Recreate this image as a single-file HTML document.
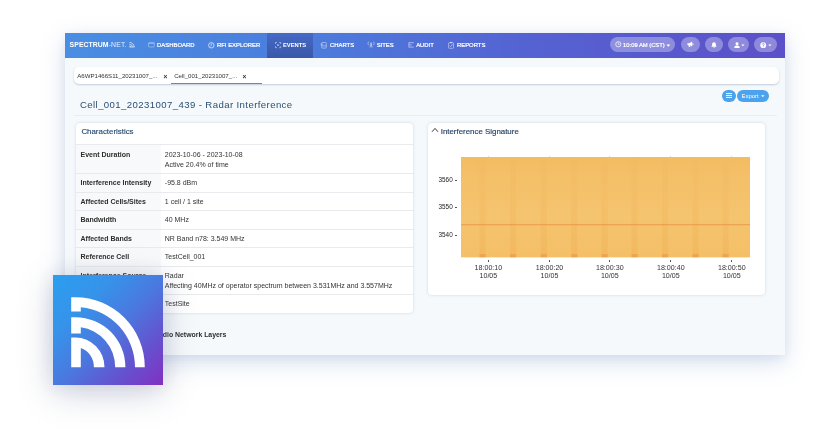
<!DOCTYPE html>
<html>
<head>
<meta charset="utf-8">
<style>
*{box-sizing:border-box;margin:0;padding:0}
html,body{width:821px;height:442px;overflow:hidden;background:#fff;font-family:"Liberation Sans",sans-serif;}
body{position:relative}
.abs{position:absolute}
.nav,.tabs,.title,.card,.win>.abs{will-change:transform}
.win{position:absolute;left:65.4px;top:33px;width:719.3px;height:321.6px;background:#f5f9fb;box-shadow:0 7px 22px rgba(110,140,195,.29),0 2px 8px rgba(110,140,195,.10);}
.nav{position:absolute;left:-.4px;top:0;width:720px;height:24.6px;background:linear-gradient(90deg,#4a8ee3 0%,#4c7bdc 35%,#5562d2 65%,#5c50c9 100%);color:#fff;font-size:5.8px;}
.nav .it{position:absolute;top:0;height:24.6px;line-height:24.6px;white-space:nowrap;font-weight:normal;font-size:5.9px;-webkit-text-stroke:.22px #fff}
.nav .b{font-weight:bold;-webkit-text-stroke:0;font-size:5.8px}
.nav .act{position:absolute;left:201.5px;top:0;width:46.3px;height:24.6px;background:linear-gradient(180deg,#4569c6,#3958a8)}
.pill{position:absolute;top:4.05px;height:15px;border-radius:8px;background:rgba(255,255,255,.32);}
.ic{position:absolute;overflow:visible}
.tabs{position:absolute;left:8.3px;top:34px;width:705.2px;height:17.4px;background:#fff;border-radius:5px;box-shadow:0 1px 2px rgba(100,120,150,.35);font-size:6.1px;color:#333;}
.tabs span{position:absolute;top:0;line-height:17.4px;white-space:nowrap}
.title{position:absolute;left:15px;top:62.6px;font-size:9.6px;color:#2b4f78;white-space:nowrap;line-height:17px;letter-spacing:.4px}
.hr{position:absolute;left:8.5px;top:82.3px;width:703px;height:1px;background:#e9eef2}
.card{position:absolute;background:#fff;border-radius:4px;box-shadow:0 0 3px rgba(120,150,200,.35);}
.c1{left:10.6px;top:90px;width:337.2px;height:189.6px;overflow:hidden}
.c2{left:362.5px;top:89.6px;width:336.5px;height:171.6px}
.chd{position:absolute;left:5.4px;top:0;font-size:7.9px;color:#274a73;line-height:18.7px;white-space:nowrap;-webkit-text-stroke:.15px #274a73}
.row{position:absolute;left:0;width:337.2px;border-top:1px solid #e8eaed;font-size:7px;color:#333}
.row .l{position:absolute;left:0;top:0;bottom:0;width:84.6px;background:#f8f9fa;font-weight:bold;padding-left:4.5px;font-size:7px;color:#2d2d2d}
.row .v{position:absolute;left:88.8px;top:0;white-space:nowrap}
.row .l,.row .v{line-height:10.4px;padding-top:4px}
.tk{position:absolute;font-size:6.4px;color:#222;line-height:8px;white-space:nowrap}
.xt{position:absolute;font-size:7.1px;color:#333;line-height:7.8px;text-align:center;width:40px;white-space:nowrap}
.logo{position:absolute;left:53px;top:275px;width:109.6px;height:109.6px;background:linear-gradient(135deg,#2b9eef 0%,#3693ea 28%,#4c76de 54%,#6650ce 78%,#8230c2 100%);box-shadow:0 8px 32px rgba(100,110,150,.30),0 0 20px rgba(100,110,150,.13)}
</style>
</head>
<body>
<div class="win">
  <div class="nav">
   <div style="position:absolute;left:.5px;top:0;width:719px;height:24.6px">
    <div class="act"></div>
    <div class="it b" style="left:4.1px;font-size:6.9px;letter-spacing:.05px">SPECTRUM<span style="font-weight:normal;opacity:.85;letter-spacing:.15px">-NET.</span></div>
    <div class="it" style="left:91.6px">DASHBOARD</div>
    <div class="it" style="left:151.5px">RFI EXPLORER</div>
    <div class="it b" style="left:217.5px">EVENTS</div>
    <div class="it" style="left:264.5px">CHARTS</div>
    <div class="it" style="left:311.2px">SITES</div>
    <div class="it" style="left:350.7px">AUDIT</div>
    <div class="it" style="left:391.5px">REPORTS</div>
    <div class="pill" style="left:544.4px;width:65.6px"></div>
    <div class="pill" style="left:615.2px;width:19.8px"></div>
    <div class="pill" style="left:639.4px;width:18.6px"></div>
    <div class="pill" style="left:662.6px;width:21.4px"></div>
    <div class="pill" style="left:688.4px;width:23.5px"></div>
    <div class="it" style="left:557.6px;font-size:5.8px">10:09 AM (CST)</div>
    <!-- nav icons -->
    <svg class="ic" style="left:63.4px;top:9.2px" width="6" height="5.4" viewBox="0 0 6 5.4"><g fill="none" stroke="#fff" stroke-width=".8" opacity=".8"><path d="M.4 .5 A4.6 4.6 0 0 1 5.2 5"/><path d="M.4 2.3 A2.9 2.9 0 0 1 3.4 5"/><path d="M.4 4 A1.2 1.2 0 0 1 1.7 5"/><path d="M.4 5 H5.6"/></g></svg>
    <svg class="ic" style="left:82.5px;top:9.4px" width="7" height="5.6" viewBox="0 0 7 5.6"><rect x=".5" y=".6" width="5.8" height="4.4" rx=".9" fill="none" stroke="#fff" stroke-width=".55" opacity=".62"/><path d="M.6 1.4 H6.2" stroke="#fff" stroke-width=".6" opacity=".6"/></svg>
    <svg class="ic" style="left:142.3px;top:9.1px" width="6.6" height="6.6" viewBox="0 0 6.6 6.6"><circle cx="3.3" cy="3.3" r="2.7" fill="none" stroke="#fff" stroke-width=".75" opacity=".9"/><path d="M3.3 1.6 V3.5 L2.3 4.3" fill="none" stroke="#fff" stroke-width=".7" opacity=".85"/></svg>
    <svg class="ic" style="left:209px;top:9.1px" width="6.4" height="6.4" viewBox="0 0 6.4 6.4"><g fill="none" stroke="#fff" stroke-width=".7" opacity=".7"><path d="M.5 2 V.5 H2"/><path d="M4.2 .5 H5.7 V2"/><path d="M.5 4.2 V5.7 H2"/><path d="M4.2 5.7 H5.7 V4.2"/><path d="M2.2 2.2 L4 4 M4 2.2 L2.2 4"/></g></svg>
    <svg class="ic" style="left:254.6px;top:9px" width="7.2" height="6.8" viewBox="0 0 7.2 6.8"><g fill="none" stroke="#fff" stroke-width=".6" opacity=".72"><rect x="1.7" y=".5" width="4.6" height="5.6" rx=".6"/><path d="M.4 2.3 H3.2 M1.7 3.9 H6.3"/></g></svg>
    <svg class="ic" style="left:301.2px;top:8.3px" width="8.4" height="7" viewBox="0 0 8.4 7"><g fill="none" stroke="#fff" stroke-width=".6" opacity=".72"><path d="M1.6 .6 A3 3 0 0 0 1.6 4.2"/><path d="M6.6 .6 A3 3 0 0 1 6.6 4.2"/><path d="M4.1 2.4 V6.4 M4.1 3 L2.9 6.4 M4.1 3 L5.3 6.4"/><circle cx="4.1" cy="2.3" r=".6"/></g></svg>
    <svg class="ic" style="left:342px;top:8.9px" width="6.6" height="6" viewBox="0 0 6.6 6"><g fill="none" stroke="#fff" stroke-width=".65" opacity=".75"><path d="M.9 .4 V5.4"/><path d="M.9 .7 H5.8 M.9 2.9 H3.6 M.9 5.1 H5.8"/></g></svg>
    <svg class="ic" style="left:382.7px;top:8.5px" width="6.4" height="7" viewBox="0 0 6.4 7"><g fill="none" stroke="#fff" stroke-width=".6" opacity=".75"><rect x=".6" y=".7" width="4.9" height="5.6" rx=".6"/><path d="M1.7 3.6 L2.7 4.6 L4.5 2.2"/><path d="M2 .6 H4.1" stroke-width="1"/></g></svg>
    <!-- pill icons -->
    <svg class="ic" style="left:549.4px;top:8.4px" width="6.6" height="6.6" viewBox="0 0 6.6 6.6"><circle cx="3.3" cy="3.3" r="2.6" fill="none" stroke="#fff" stroke-width=".75"/><path d="M3.3 1.7 V3.5 H4.5" fill="none" stroke="#fff" stroke-width=".7"/></svg>
    <svg class="ic" style="left:600.2px;top:10.5px" width="4.6" height="3" viewBox="0 0 4 2.6"><path d="M.3 .4 H3.7 L2 2.3 Z" fill="#fff"/></svg>
    <svg class="ic" style="left:621.2px;top:8.4px" width="7" height="6.6" viewBox="0 0 7 6.6"><g fill="#fff"><path d="M.4 2.3 H2.2 L5.2 .6 V5.6 L2.2 4.1 H.4 Z"/><rect x="5.5" y="2.2" width=".9" height="1.9" rx=".4"/><path d="M1.3 4.1 H2.7 L3.3 6.1 H2 Z"/></g></svg>
    <svg class="ic" style="left:645.6px;top:8.5px" width="6" height="6.4" viewBox="0 0 6 6.4"><g fill="#fff"><path d="M3 .3 C4.5 .3 4.9 1.6 4.9 2.8 C4.9 3.8 5.3 4.3 5.7 4.8 H.3 C.7 4.3 1.1 3.8 1.1 2.8 C1.1 1.6 1.5 .3 3 .3 Z"/><path d="M2.2 5.2 H3.8 A.8 .8 0 0 1 2.2 5.2 Z"/></g></svg>
    <svg class="ic" style="left:668.9px;top:8.6px" width="6" height="6.2" viewBox="0 0 6 6.2"><g fill="#fff"><circle cx="3" cy="1.7" r="1.5"/><path d="M.4 6 V5.2 C.4 4 1.4 3.5 3 3.5 C4.6 3.5 5.6 4 5.6 5.2 V6 Z"/></g></svg>
    <svg class="ic" style="left:675.4px;top:10.7px" width="3.8" height="2.7" viewBox="0 0 3.4 2.4"><path d="M.2 .4 H3.2 L1.7 2.1 Z" fill="#fff"/></svg>
    <svg class="ic" style="left:694.8px;top:8.5px" width="6.4" height="6.4" viewBox="0 0 6.4 6.4"><circle cx="3.2" cy="3.2" r="2.9" fill="#fff"/><path d="M2.3 2.5 A.95 .95 0 1 1 3.2 3.4 V4" fill="none" stroke="#8a84dc" stroke-width=".75"/><circle cx="3.2" cy="4.8" r=".45" fill="#8a84dc"/></svg>
    <svg class="ic" style="left:702.4px;top:10.7px" width="3.8" height="2.7" viewBox="0 0 3.4 2.4"><path d="M.2 .4 H3.2 L1.7 2.1 Z" fill="#fff"/></svg>
   </div>
  </div>
  <div class="tabs">
    <span style="left:3.3px">A6WP1466S11_20231007_...</span>
    <span style="left:89.6px;top:.6px;font-weight:bold;font-size:6.6px">×</span>
    <span style="left:100.2px">Cell_001_20231007_...</span>
    <span style="left:168.6px;top:.6px;font-weight:bold;font-size:6.6px">×</span>
    <div class="abs" style="left:96.6px;top:16px;width:91.6px;height:1.2px;background:#4a8ee3"></div>
  </div>
  <div class="title">Cell_001_20231007_439 <span id="t2">- Radar Interference</span></div>
  <div class="hr"></div>
  <div class="abs" style="left:656.7px;top:57px;width:14.1px;height:12px;border-radius:6px;background:#4aa3ec"></div>
  <div class="abs" style="left:660.8px;top:60.3px;width:5.8px;height:.8px;opacity:.92;background:#fff;box-shadow:0 1.95px 0 #fff,0 3.9px 0 #fff"></div>
  <div class="abs" style="left:672px;top:57px;width:31.9px;height:12px;border-radius:6px;background:#4aa3ec;color:#fff;font-size:6px;line-height:12px;padding-left:4.4px">Export</div>
  <svg class="abs" style="left:695.3px;top:62px" width="3.6" height="2.4" viewBox="0 0 3.6 2.4"><path d="M.1 .3 H3.5 L1.8 2.2 Z" fill="#fff"/></svg>

  <div class="card c1">
    <div class="chd">Characteristics</div>
    <div class="row" style="top:21.2px;height:29px"><div class="l" style="padding-top:4.5px">Event Duration</div><div class="v" style="padding-top:4.5px;line-height:10.1px">2023-10-06 - 2023-10-08<br>Active 20.4% of time</div></div>
    <div class="row" style="top:50.1px;height:19px"><div class="l">Interference Intensity</div><div class="v">-95.8 dBm</div></div>
    <div class="row" style="top:68.6px;height:19px"><div class="l">Affected Cells/Sites</div><div class="v">1 cell / 1 site</div></div>
    <div class="row" style="top:87.1px;height:19px"><div class="l">Bandwidth</div><div class="v">40 MHz</div></div>
    <div class="row" style="top:105.6px;height:19px"><div class="l">Affected Bands</div><div class="v">NR Band n78: 3.549 MHz</div></div>
    <div class="row" style="top:124.1px;height:19px"><div class="l">Reference Cell</div><div class="v">TestCell_001</div></div>
    <div class="row" style="top:143.1px;height:29px"><div class="l">Interference Source</div><div class="v" style="line-height:10.1px">Radar<br>Affecting 40MHz of operator spectrum between 3.531MHz and 3.557MHz</div></div>
    <div class="row" style="top:171.1px;height:19px"><div class="l">Site</div><div class="v">TestSite</div></div>
  </div>
  <div class="abs" style="left:88.6px;top:296.9px;font-size:6.9px;font-weight:bold;color:#2d2d2d;white-space:nowrap;line-height:9px">Radio Network Layers</div>

  <div class="card c2">
    <div class="chd" style="left:12.7px;color:#213f63;-webkit-text-stroke:.15px #213f63">Interference Signature</div>
    <svg class="abs" style="left:3.4px;top:4.2px" width="8" height="6" viewBox="0 0 8 6"><path d="M1 4.8 L4 1.4 L7 4.8" fill="none" stroke="#222" stroke-width=".9"/></svg>
    <svg class="abs" style="left:33px;top:34.4px" width="289" height="100.4" viewBox="0 0 289 100.4" preserveAspectRatio="none">
      <defs>
        <linearGradient id="hg" x1="0" y1="0" x2="0" y2="1">
          <stop offset="0" stop-color="#f3bc63"/><stop offset="0.3" stop-color="#f4c16a"/><stop offset="0.6" stop-color="#f5c46e"/><stop offset="1" stop-color="#f4bf67"/>
        </linearGradient>
        <linearGradient id="bg" x1="0" y1="0" x2="0" y2="1">
          <stop offset="0" stop-color="#e9a040" stop-opacity="0.04"/><stop offset="0.5" stop-color="#e9a040" stop-opacity="0.13"/><stop offset="0.962" stop-color="#e9a040" stop-opacity="0.2"/><stop offset="0.966" stop-color="#e88a3c" stop-opacity="0.5"/><stop offset="1" stop-color="#e88a3c" stop-opacity="0.5"/>
        </linearGradient>
      </defs>
      <rect x="0" y="0" width="289" height="100.4" fill="url(#hg)"/>
      <g fill="url(#bg)">
        <rect x="18.5" y="0" width="6.2" height="100.4"/>
        <rect x="49" y="0" width="6.2" height="100.4"/>
        <rect x="79.7" y="0" width="6.2" height="100.4"/>
        <rect x="110.2" y="0" width="6.2" height="100.4"/>
        <rect x="140.5" y="0" width="6.2" height="100.4"/>
        <rect x="170.5" y="0" width="6.2" height="100.4"/>
        <rect x="201" y="0" width="6.2" height="100.4"/>
        <rect x="231.5" y="0" width="6.2" height="100.4"/>
        <rect x="261.5" y="0" width="6.2" height="100.4"/>
      </g>
      <rect x="0" y="67.3" width="289" height=".9" fill="#ec9646"/>
    </svg>
    <div class="tk" style="left:10.5px;top:52.6px">3560</div>
    <div class="tk" style="left:10.5px;top:80px">3550</div>
    <div class="tk" style="left:10.5px;top:107.6px">3540</div>
    <div class="abs" style="left:26.8px;top:56.6px;width:2.4px;height:.7px;background:#555"></div>
    <div class="abs" style="left:26.8px;top:84px;width:2.4px;height:.7px;background:#555"></div>
    <div class="abs" style="left:26.8px;top:111.6px;width:2.4px;height:.7px;background:#555"></div>
    <div class="abs" style="left:60.0px;top:137px;width:.7px;height:2.2px;background:#555"></div><div class="abs" style="left:60.0px;top:32.6px;width:.7px;height:1.8px;background:#d9dde2"></div><div class="abs" style="left:121.2px;top:137px;width:.7px;height:2.2px;background:#555"></div><div class="abs" style="left:121.2px;top:32.6px;width:.7px;height:1.8px;background:#d9dde2"></div><div class="abs" style="left:181.4px;top:137px;width:.7px;height:2.2px;background:#555"></div><div class="abs" style="left:181.4px;top:32.6px;width:.7px;height:1.8px;background:#d9dde2"></div><div class="abs" style="left:242.3px;top:137px;width:.7px;height:2.2px;background:#555"></div><div class="abs" style="left:242.3px;top:32.6px;width:.7px;height:1.8px;background:#d9dde2"></div><div class="abs" style="left:303.2px;top:137px;width:.7px;height:2.2px;background:#555"></div><div class="abs" style="left:303.2px;top:32.6px;width:.7px;height:1.8px;background:#d9dde2"></div>
    <div class="xt" style="left:40.4px;top:142.3px">18:00:10<br>10/05</div>
    <div class="xt" style="left:101.5px;top:142.3px">18:00:20<br>10/05</div>
    <div class="xt" style="left:161.8px;top:142.3px">18:00:30<br>10/05</div>
    <div class="xt" style="left:222.8px;top:142.3px">18:00:40<br>10/05</div>
    <div class="xt" style="left:283.8px;top:142.3px">18:00:50<br>10/05</div>
  </div>
</div>
<div class="logo">
  <svg width="109.6" height="109.6" viewBox="0 0 109.6 109.6" style="position:absolute;left:0;top:0">
    <g fill="#fff">
      <path d="M18.20 22.20 H22.40 A69.40 70.00 0 0 1 91.80 92.20 H82.00 A59.60 60.30 0 0 0 27.80 32.15 V36.50 H18.20 Z"/>
      <path d="M18.20 42.20 H22.40 A50.00 50.00 0 0 1 72.40 92.20 H62.20 A39.80 40.30 0 0 0 27.80 52.27 V58.50 H18.20 Z"/>
      <path d="M18.20 62.50 H22.40 A29.10 29.70 0 0 1 51.50 92.20 H40.90 A18.50 20.00 0 0 0 27.80 73.07 V92.20 H18.20 Z"/>
    </g>
  </svg>
</div>
</body>
</html>
